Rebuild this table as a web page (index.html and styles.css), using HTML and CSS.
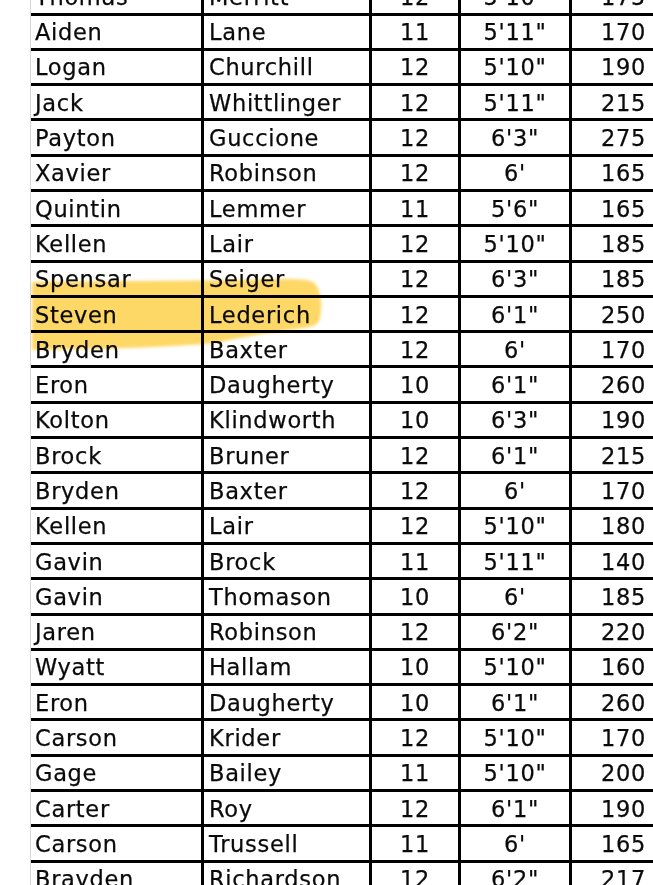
FILE: index.html
```html
<!DOCTYPE html>
<html lang="en">
<head>
<meta charset="utf-8">
<title>Roster</title>
<link rel="stylesheet" href="styles.css">
</head>
<body>
<div class="sheet">
  <div class="grid">
    <div class="row"><div class="c first">Thomas</div><div class="c last">Merritt</div><div class="c grade">12</div><div class="c ht">5'10"</div><div class="c wt">175</div></div>
    <div class="row"><div class="c first">Aiden</div><div class="c last">Lane</div><div class="c grade">11</div><div class="c ht">5'11"</div><div class="c wt">170</div></div>
    <div class="row"><div class="c first">Logan</div><div class="c last">Churchill</div><div class="c grade">12</div><div class="c ht">5'10"</div><div class="c wt">190</div></div>
    <div class="row"><div class="c first">Jack</div><div class="c last">Whittlinger</div><div class="c grade">12</div><div class="c ht">5'11"</div><div class="c wt">215</div></div>
    <div class="row"><div class="c first">Payton</div><div class="c last">Guccione</div><div class="c grade">12</div><div class="c ht">6'3"</div><div class="c wt">275</div></div>
    <div class="row"><div class="c first">Xavier</div><div class="c last">Robinson</div><div class="c grade">12</div><div class="c ht">6'</div><div class="c wt">165</div></div>
    <div class="row"><div class="c first">Quintin</div><div class="c last">Lemmer</div><div class="c grade">11</div><div class="c ht">5'6"</div><div class="c wt">165</div></div>
    <div class="row"><div class="c first">Kellen</div><div class="c last">Lair</div><div class="c grade">12</div><div class="c ht">5'10"</div><div class="c wt">185</div></div>
    <div class="row"><div class="c first">Spensar</div><div class="c last">Seiger</div><div class="c grade">12</div><div class="c ht">6'3"</div><div class="c wt">185</div></div>
    <div class="row"><div class="c first">Steven</div><div class="c last">Lederich</div><div class="c grade">12</div><div class="c ht">6'1"</div><div class="c wt">250</div></div>
    <div class="row"><div class="c first">Bryden</div><div class="c last">Baxter</div><div class="c grade">12</div><div class="c ht">6'</div><div class="c wt">170</div></div>
    <div class="row"><div class="c first">Eron</div><div class="c last">Daugherty</div><div class="c grade">10</div><div class="c ht">6'1"</div><div class="c wt">260</div></div>
    <div class="row"><div class="c first">Kolton</div><div class="c last">Klindworth</div><div class="c grade">10</div><div class="c ht">6'3"</div><div class="c wt">190</div></div>
    <div class="row"><div class="c first">Brock</div><div class="c last">Bruner</div><div class="c grade">12</div><div class="c ht">6'1"</div><div class="c wt">215</div></div>
    <div class="row"><div class="c first">Bryden</div><div class="c last">Baxter</div><div class="c grade">12</div><div class="c ht">6'</div><div class="c wt">170</div></div>
    <div class="row"><div class="c first">Kellen</div><div class="c last">Lair</div><div class="c grade">12</div><div class="c ht">5'10"</div><div class="c wt">180</div></div>
    <div class="row"><div class="c first">Gavin</div><div class="c last">Brock</div><div class="c grade">11</div><div class="c ht">5'11"</div><div class="c wt">140</div></div>
    <div class="row"><div class="c first">Gavin</div><div class="c last">Thomason</div><div class="c grade">10</div><div class="c ht">6'</div><div class="c wt">185</div></div>
    <div class="row"><div class="c first">Jaren</div><div class="c last">Robinson</div><div class="c grade">12</div><div class="c ht">6'2"</div><div class="c wt">220</div></div>
    <div class="row"><div class="c first">Wyatt</div><div class="c last">Hallam</div><div class="c grade">10</div><div class="c ht">5'10"</div><div class="c wt">160</div></div>
    <div class="row"><div class="c first">Eron</div><div class="c last">Daugherty</div><div class="c grade">10</div><div class="c ht">6'1"</div><div class="c wt">260</div></div>
    <div class="row"><div class="c first">Carson</div><div class="c last">Krider</div><div class="c grade">12</div><div class="c ht">5'10"</div><div class="c wt">170</div></div>
    <div class="row"><div class="c first">Gage</div><div class="c last">Bailey</div><div class="c grade">11</div><div class="c ht">5'10"</div><div class="c wt">200</div></div>
    <div class="row"><div class="c first">Carter</div><div class="c last">Roy</div><div class="c grade">12</div><div class="c ht">6'1"</div><div class="c wt">190</div></div>
    <div class="row"><div class="c first">Carson</div><div class="c last">Trussell</div><div class="c grade">11</div><div class="c ht">6'</div><div class="c wt">165</div></div>
    <div class="row"><div class="c first">Brayden</div><div class="c last">Richardson</div><div class="c grade">12</div><div class="c ht">6'2"</div><div class="c wt">217</div></div>
  </div>
  <svg class="highlight" width="300" height="90" viewBox="0 0 300 90" aria-hidden="true">
    <defs>
      <filter id="soft" x="-5%" y="-10%" width="110%" height="120%">
        <feGaussianBlur stdDeviation="1.8"/>
      </filter>
    </defs>
    <path filter="url(#soft)" fill="#fed866" d="M1 11 C 60 10, 150 10, 215 9 C 250 8, 272 7, 282 11 C 291 17, 292 38, 288 50 C 285 56, 275 57, 258 59 C 236 62, 212 66, 185 72 C 140 76, 80 78, 1 79 Z"/>
  </svg>
</div>
</body>
</html>
```

FILE: styles.css
```css
html, body {
  margin: 0;
  padding: 0;
  background: #ffffff;
  overflow: hidden;
  height: 885px;
}

.sheet {
  position: relative;
  margin-left: 30px;
  margin-top: -19.8px;
  border-left: 1px solid #d6d6d6;
}

.grid {
  display: grid;
  grid-template-columns: 173px 168px 89px 111px 1fr;
  grid-auto-rows: 35.3px;
  font-family: "DejaVu Sans", Verdana, sans-serif;
  font-size: 22.5px;
  letter-spacing: 0.7px;
  color: #0a0a0a;
  -webkit-text-stroke: 0.25px #0a0a0a;
}

.row {
  display: contents;
}

.c {
  display: flex;
  align-items: center;
  border-bottom: 3px solid #000;
  border-right: 3px solid #000;
  padding-top: 1px;
  white-space: nowrap;
  overflow: hidden;
}

.first { padding-left: 4px; }
.last { padding-left: 5px; }
.grade, .ht { justify-content: center; }
.wt {
  justify-content: flex-end;
  padding-right: 7px;
  border-right: none;
}

.highlight {
  position: absolute;
  left: 0;
  top: 291px;
  mix-blend-mode: multiply;
  pointer-events: none;
}
```
